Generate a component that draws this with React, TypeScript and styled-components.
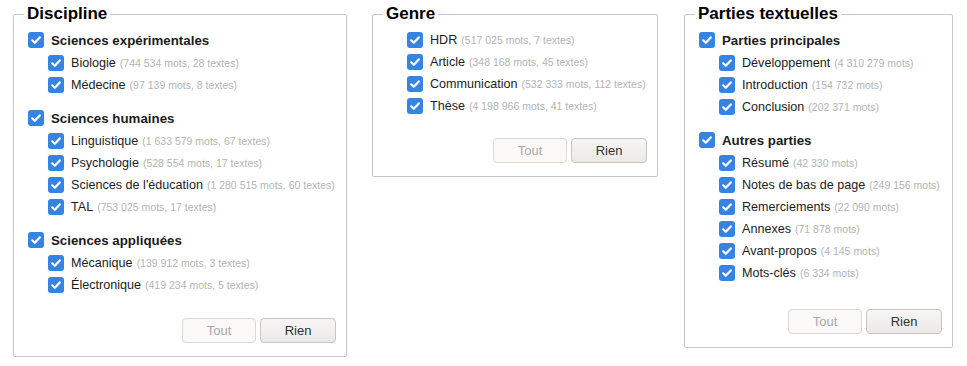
import styled, { createGlobalStyle } from 'styled-components'

const GlobalStyle = createGlobalStyle`
  body {
    margin: 0;
    background: #ffffff;
    font-family: "Liberation Sans", Arial, sans-serif;
    font-size: 14px;
    color: #1c1c1c;
  }
`

const Page = styled.div`
  display: flex;
  align-items: flex-start;
  gap: 25px;
  padding: 4px 0 0 13px;
`

const Panel = styled.fieldset<{ $width: number; $shift?: number }>`
  box-sizing: border-box;
  width: ${(p) => p.$width}px;
  margin: 0 0 0 ${(p) => p.$shift ?? 0}px;
  padding: 5px 10px 13px 14px;
  border: 1px solid #c6c6c6;
  border-radius: 2px;
  min-width: 0;
`

const Legend = styled.legend`
  margin-left: -4px;
  padding: 0 3px;
  font-size: 17px;
  line-height: 20px;
  font-weight: bold;
  color: #000;
`

const Group = styled.div`
  & + & {
    margin-top: 11px;
  }
`

const Row = styled.label<{ $indent?: boolean; $head?: boolean }>`
  display: flex;
  align-items: center;
  gap: 7px;
  height: 22px;
  margin-left: ${(p) => (p.$indent ? 20 : 0)}px;
  margin-bottom: ${(p) => (p.$head ? 1 : 0)}px;
  font-size: ${(p) => (p.$head ? 13.3 : 12.6)}px;
  font-weight: ${(p) => (p.$head ? 'bold' : 'normal')};
  white-space: nowrap;
`

const Box = styled.span`
  flex: none;
  width: 16px;
  height: 16px;
  border-radius: 3px;
  background: #3584e4;
  display: flex;
  align-items: center;
  justify-content: center;
`

const Count = styled.span`
  margin-left: 4px;
  font-size: 10.5px;
  color: #b4b4b4;
`

const Footer = styled.div<{ $gap: number }>`
  display: flex;
  justify-content: flex-end;
  gap: 4px;
  margin-top: ${(p) => p.$gap}px;
`

const Button = styled.button<{ $w: number }>`
  box-sizing: border-box;
  width: ${(p) => p.$w}px;
  height: 25px;
  font-family: "Liberation Sans", Arial, sans-serif;
  font-size: 13px;
  border-radius: 4px;
  border: 1px solid #c9c5c0;
  color: #2e3436;
  background: linear-gradient(#f7f6f5, #ebe9e7);
  padding: 0;

  &:disabled {
    border-color: #dcd8d4;
    color: #a8a8a8;
    background: #faf9f8;
  }
`

const Check = () => (
  <Box>
    <svg width="12" height="12" viewBox="0 0 12 12">
      <path d="M2.2 6.3 L4.8 8.8 L9.8 3.4" fill="none" stroke="#fff" strokeWidth="2.2" strokeLinecap="round" strokeLinejoin="round" />
    </svg>
  </Box>
)

type Item = { label: string; count: string }
type Section = { title?: string; items: Item[] }

const discipline: Section[] = [
  {
    title: 'Sciences expérimentales',
    items: [
      { label: 'Biologie', count: '(744 534 mots, 28 textes)' },
      { label: 'Médecine', count: '(97 139 mots, 8 textes)' },
    ],
  },
  {
    title: 'Sciences humaines',
    items: [
      { label: 'Linguistique', count: '(1 633 579 mots, 67 textes)' },
      { label: 'Psychologie', count: '(528 554 mots, 17 textes)' },
      { label: "Sciences de l'éducation", count: '(1 280 515 mots, 60 textes)' },
      { label: 'TAL', count: '(753 025 mots, 17 textes)' },
    ],
  },
  {
    title: 'Sciences appliquées',
    items: [
      { label: 'Mécanique', count: '(139 912 mots, 3 textes)' },
      { label: 'Électronique', count: '(419 234 mots, 5 textes)' },
    ],
  },
]

const genre: Section[] = [
  {
    items: [
      { label: 'HDR', count: '(517 025 mots, 7 textes)' },
      { label: 'Article', count: '(348 168 mots, 45 textes)' },
      { label: 'Communication', count: '(532 333 mots, 112 textes)' },
      { label: 'Thèse', count: '(4 198 966 mots, 41 textes)' },
    ],
  },
]

const parties: Section[] = [
  {
    title: 'Parties principales',
    items: [
      { label: 'Développement', count: '(4 310 279 mots)' },
      { label: 'Introduction', count: '(154 732 mots)' },
      { label: 'Conclusion', count: '(202 371 mots)' },
    ],
  },
  {
    title: 'Autres parties',
    items: [
      { label: 'Résumé', count: '(42 330 mots)' },
      { label: 'Notes de bas de page', count: '(249 156 mots)' },
      { label: 'Remerciements', count: '(22 090 mots)' },
      { label: 'Annexes', count: '(71 878 mots)' },
      { label: 'Avant-propos', count: '(4 145 mots)' },
      { label: 'Mots-clés', count: '(6 334 mots)' },
    ],
  },
]

type FilterProps = { title: string; sections: Section[]; width: number; footerGap: number; shift?: number }

const Filter = ({ title, sections, width, footerGap, shift }: FilterProps) => (
  <Panel $width={width} $shift={shift}>
    <Legend>{title}</Legend>
    {sections.map((s, i) => (
      <Group key={i}>
        {s.title && (
          <Row $head>
            <Check />
            {s.title}
          </Row>
        )}
        {s.items.map((it) => (
          <Row $indent key={it.label}>
            <Check />
            <span>
              {it.label}
              <Count>{it.count}</Count>
            </span>
          </Row>
        ))}
      </Group>
    ))}
    <Footer $gap={footerGap}>
      <Button $w={74} disabled>Tout</Button>
      <Button $w={76}>Rien</Button>
    </Footer>
  </Panel>
)

const App = () => (
  <>
    <GlobalStyle />
    <Page>
      <Filter title="Discipline" sections={discipline} width={334} footerGap={22} />
      <Filter title="Genre" sections={genre} width={286} footerGap={21} />
      <Filter title="Parties textuelles" sections={parties} width={269} footerGap={25} shift={1} />
    </Page>
  </>
)

export default App
